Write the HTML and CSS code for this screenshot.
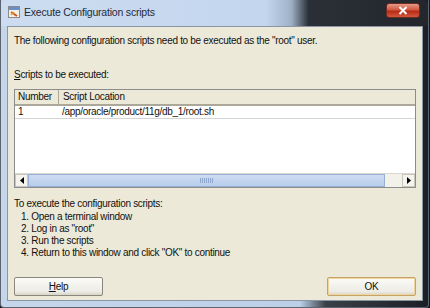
FILE: index.html
```html
<html>
    <head>
        <title>Execute Configuration scripts</title>
        <link rel="stylesheet" href="styles.css">
    </head>
    <body>
        <div class="window">
            <div class="titlebar">
                <span class="appicon">
                    <svg width="12" height="12" viewBox="0 0 12 12">
                        <rect x="0.5" y="0.5" width="11" height="11" fill="#f4f0e6" stroke="#8a8a8a"/>
                        <rect x="1" y="1" width="10" height="3" fill="#6a8fc4"/>
                        <path d="M3 6 L9 10" stroke="#d2541c" stroke-width="2"/>
                        <path d="M3 9 L6 6" stroke="#e0a030" stroke-width="1.5"/>
                    </svg>
                </span>
                <span class="title">Execute Configuration scripts</span>
                <span class="close">
                    <svg width="10" height="9" viewBox="0 0 10 9">
                        <path d="M1.5 1 L8.5 8 M8.5 1 L1.5 8" stroke="#fff" stroke-width="2"/>
                    </svg>
                </span>
            </div>
            <div class="client">
                <p class="intro">The following configuration scripts need to be executed as the "root" user.</p>
                <p class="label"><u>S</u>cripts to be executed:</p>
                <div class="table">
                    <div class="row head">
                        <span class="c1">Number</span>
                        <span class="c2">Script Location</span>
                    </div>
                    <div class="row item">
                        <span class="c1">1</span>
                        <span class="c2">/app/oracle/product/11g/db_1/root.sh</span>
                    </div>
                    <div class="filler"></div>
                    <div class="hscroll">
                        <span class="arrow">
                            <svg width="4" height="7" viewBox="0 0 4 7"><path d="M4 0 L0 3.5 L4 7 Z" fill="#000"/></svg>
                        </span>
                        <span class="thumb"><span class="grip"></span></span>
                        <span class="track"></span>
                        <span class="arrow">
                            <svg width="4" height="7" viewBox="0 0 4 7"><path d="M0 0 L4 3.5 L0 7 Z" fill="#000"/></svg>
                        </span>
                    </div>
                </div>
                <div class="steps">
                    <p>To execute the configuration scripts:</p>
                    <ol>
                        <li>1. Open a terminal window</li>
                        <li>2. Log in as "root"</li>
                        <li>3. Run the scripts</li>
                        <li>4. Return to this window and click "OK" to continue</li>
                    </ol>
                </div>
                <div class="buttons">
                    <button class="btn"><u>H</u>elp</button>
                    <button class="btn default">OK</button>
                </div>
            </div>
        </div>
    </body>
</html>
```

FILE: styles.css
```css
body {
    margin: 0;
    background: #15171a;
    font-family: 'Liberation Sans', Arial, sans-serif;
    font-size: 10px;
    letter-spacing: -0.3px;
    line-height: 12px;
    color: #111;
    overflow: hidden;
}
.window {
    width: 416px;
    height: 301px;
    padding: 0 5px 6px 6px;
    border: 1px solid #5c6470;
    border-top: 0;
    border-radius: 0 0 4px 4px;
    background: linear-gradient(to right, #c6d6ea 0, #bcd0e8 70%, #3a4048 76%, #1c1f24 100%);
    display: flex;
    flex-direction: column;
}
.titlebar {
    height: 24px;
    display: flex;
    align-items: center;
    margin-left: -6px;
    margin-right: -5px;
    padding: 0 8px 2px 7px;
    border-radius: 5px 5px 0 0;
    background: linear-gradient(to right, #cddcf0 0, #c3d6ee 62%, #9fb1c6 68%, #2b3038 72%, #23262b 100%);
}
.appicon {
    width: 12px;
    height: 12px;
    margin-right: 4px;
    display: flex;
}
.title {
    flex: 1;
    font-size: 10.5px;
    letter-spacing: -0.2px;
    color: #1e2a3a;
}
.close {
    width: 32px;
    height: 13px;
    margin-top: -4px;
    border: 1px solid #6b2a22;
    border-radius: 3px;
    background: linear-gradient(#e89a88 0, #d05840 45%, #b82a16 55%, #d0583c 100%);
    display: flex;
    align-items: center;
    justify-content: center;
}
.client {
    flex: 1;
    background: #ece9d8;
    border: 1px solid #8a96a6;
    padding: 0 6px 0 6px;
    display: flex;
    flex-direction: column;
}
p {
    margin: 0;
}
.intro {
    margin-top: 8px;
}
.label {
    margin-top: 22px;
}
.table {
    margin-top: 8px;
    height: 97px;
    border: 1px solid #8c8c8c;
    background: #fff;
    display: flex;
    flex-direction: column;
}
.row {
    display: flex;
    align-items: center;
}
.row .c1 {
    width: 40px;
    padding-left: 3px;
}
.row .c2 {
    padding-left: 4px;
}
.head {
    height: 14px;
    background: #ece9d8;
    border-bottom: 2px solid #aca899;
}
.head .c1 {
    border-right: 1px solid #aca899;
    height: 14px;
    line-height: 14px;
}
.item {
    height: 12px;
    border-bottom: 1px solid #d4d4d4;
}
.filler {
    flex: 1;
}
.hscroll {
    height: 13px;
    display: flex;
    background: #f2f1ea;
    border-top: 1px solid #d8d8d0;
}
.arrow {
    width: 11px;
    background: #f4f3ee;
    border: 1px solid #c9c7ba;
    display: flex;
    align-items: center;
    justify-content: center;
}
.thumb {
    width: 355px;
    background: linear-gradient(#cddcf2, #b8cdea);
    border: 1px solid #98afd4;
    display: flex;
    align-items: center;
    justify-content: center;
}
.grip {
    width: 14px;
    height: 5px;
    background: repeating-linear-gradient(to right, #8fa6cc 0, #8fa6cc 1px, transparent 1px, transparent 2px);
}
.track {
    flex: 1;
}
.steps {
    margin-top: 10px;
}
.steps ol {
    list-style: none;
    margin: 1px 0 0 0;
    padding-left: 7px;
}
.buttons {
    margin-top: auto;
    margin-bottom: 4px;
    display: flex;
    justify-content: space-between;
}
.btn {
    width: 89px;
    height: 19px;
    font-family: 'Liberation Sans', Arial, sans-serif;
    font-size: 10px;
    letter-spacing: -0.3px;
    color: #111;
    border: 1px solid #8a887c;
    border-radius: 2px;
    background: linear-gradient(#fbfbf8, #ecebe5 80%, #d8d4c6);
    padding: 0;
}
.btn.default {
    border-color: #c4a468;
    box-shadow: inset 0 0 0 1px #f0d49c;
}
```
